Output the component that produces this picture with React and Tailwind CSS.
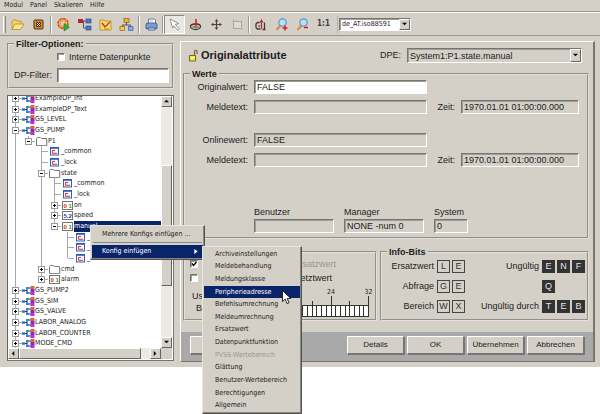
import React from "react";

const UI = "font-['DejaVu_Sans_Condensed','DejaVu_Sans',sans-serif] text-[7px]";
const SUNKEN =
  "border border-t-[#77756f] border-l-[#77756f] border-r-white border-b-white shadow-[inset_1px_1px_0_#a09d96]";
const RAISED =
  "border border-t-white border-l-white border-r-[#66645f] border-b-[#66645f] bg-[#d4d0c8]";
const GROUP = "min-w-0 border-2 border-[#e4e1da] [border-style:groove]";
const LEGEND = "ml-[5px] h-[10px] px-[2px] text-[9px] leading-[10px] font-bold";

function ToolIcon({ name }) {
  const p = { width: 15, height: 15, viewBox: "0 0 15 15", fill: "none", "aria-hidden": true };
  switch (name) {
    case "open":
      return (
        <svg {...p}>
          <path d="M2 12V4l1-1h3l1 1h4v3" fill="#f3d36a" stroke="#b98a25" strokeWidth=".8" />
          <path d="M2 12.5 5 7h9l-3.500 5.500z" fill="#fbe58c" stroke="#b98a25" strokeWidth=".8" />
        </svg>
      );
    case "close":
      return (
        <svg {...p}>
          <rect x="3" y="3" width="9" height="9" rx="1" fill="#e08a22" stroke="#4a3210" />
          <path d="m5.500 5.500 4 4m0-4-4 4" stroke="#2a1a08" strokeWidth="2.200" />
          <path d="m6 6 3 3m0-3-3 3" stroke="#fff0cc" strokeWidth="1" />
        </svg>
      );
    case "gear":
      return (
        <svg {...p}>
          <circle cx="7" cy="6.500" r="4" stroke="#d9702a" strokeWidth="3" />
          <circle cx="7" cy="6.500" r="5" stroke="#d9502a" strokeWidth="1.500" strokeDasharray="2 1.900" />
          <circle cx="7" cy="6.500" r="3.500" stroke="#f4bd45" strokeWidth="1.200" />
          <path d="M8 6.500v7.500l5.500-3.700z" fill="#3fa83c" stroke="#23751f" strokeWidth=".6" />
        </svg>
      );
    case "tree":
      return (
        <svg {...p}>
          <path d="M4 4h5M6.500 4v7h3" stroke="#555" />
          <rect x="1" y="2" width="5" height="4" fill="#b3262a" />
          <rect x="9" y="2" width="5" height="4" fill="#4a78c8" stroke="#223f7d" strokeWidth=".6" />
          <rect x="9" y="9" width="5" height="4" fill="#4a78c8" stroke="#223f7d" strokeWidth=".6" />
        </svg>
      );
    case "chart":
      return (
        <svg {...p}>
          <path d="M2 3h4l1 1h6v9H2z" fill="#f6dc6d" stroke="#b58a22" strokeWidth=".8" />
          <path d="m4 6 3 4 5-5" stroke="#c4392b" strokeWidth="1.400" />
          <path d="M6 12h5" stroke="#b58a22" />
        </svg>
      );
    case "org":
      return (
        <svg {...p}>
          <path d="M7.500 5v3M3.500 10V8h8v2" stroke="#555" />
          <rect x="5" y="1.500" width="5" height="4" fill="#efad3f" stroke="#996415" strokeWidth=".7" />
          <rect x="1" y="9.500" width="4.500" height="4" fill="#f3c558" stroke="#996415" strokeWidth=".7" />
          <rect x="9.500" y="9.500" width="4.500" height="4" fill="#89a8dd" stroke="#3c5f9f" strokeWidth=".7" />
        </svg>
      );
    case "print":
      return (
        <svg {...p}>
          <path d="M4.500 7V2h6l1 1v4" fill="#fff" stroke="#4a5f85" strokeWidth=".8" />
          <path d="m2 7 1-1h9l1 1v4.500H2z" fill="#7b9cd3" stroke="#32507f" strokeWidth=".8" />
          <path d="M4 11h7v2H4z" fill="#dce7f7" stroke="#32507f" strokeWidth=".8" />
          <path d="M6 4h3" stroke="#8a98b5" strokeWidth=".7" />
        </svg>
      );
    case "pointer":
      return (
        <svg {...p}>
          <path d="m3 2 8.500 4.500-3.200 1 4 4.200-1.500 1.500-4-4.300L5.500 11z" fill="#fff" stroke="#777" strokeWidth=".8" />
        </svg>
      );
    case "stamp":
      return (
        <svg {...p}>
          <path d="M2.500 9.500c0-1.500 2-2.500 5-2.500s5 1 5 2.500-2 3-5 3-5-1.500-5-3z" stroke="#3c3a38" strokeWidth="1.300" />
          <path d="M4.500 10h6" stroke="#3c3a38" />
          <path d="M8 2v5" stroke="#c22b25" strokeWidth="1.600" />
          <path d="M5.500 6h5L8 9.500z" fill="#c22b25" />
        </svg>
      );
    case "move":
      return (
        <svg {...p}>
          <path d="M7.500 4v7M4 7.500h7" stroke="#444" strokeWidth="1.200" />
          <path d="M7.500 2 9.300 4.400H5.700zM7.500 13l1.800-2.400H5.700zM2 7.500l2.400-1.800v3.600zM13 7.500l-2.400-1.800v3.600z" fill="#444" />
        </svg>
      );
    case "shape":
      return (
        <svg {...p}>
          <rect x="3.500" y="4.500" width="8" height="7" fill="#dedbd4" stroke="#aaa7a0" />
          <path d="M2 4h3M3.500 2.500v3M10 11.500h3M11.500 10v3" stroke="#b6b3ac" />
        </svg>
      );
    case "rotate":
      return (
        <svg {...p}>
          <path d="M6.500 5.500H4.500L3 7v3.500L4.500 12h3M7 9H5.500M11.500 5.500v7M9.500 12.500h3" stroke="#3c3a38" strokeWidth="1.300" />
          <path d="M8.500 4v8" stroke="#c22b25" strokeWidth="1.300" />
          <path d="M6.300 5.500 8.500 2l2.200 3.500z" fill="#c22b25" />
        </svg>
      );
    case "zoomin":
    case "zoomout":
      return (
        <svg {...p}>
          <path d="m6.500 8.500-4 4.500" stroke="#d58b45" strokeWidth="2" />
          <circle cx="8.500" cy="5.500" r="3.700" fill="#b9e0f8" stroke="#5a94c4" strokeWidth="1.200" />
          <path d={name === "zoomin" ? "M8.500 11h5M11 8.500v5" : "M9 10.500h4"} stroke="#cf2027" strokeWidth="1.500" />
        </svg>
      );
    default:
      return null;
  }
}

function Tool({ name, label, active }) {
  return (
    <button
      type="button"
      aria-label={label}
      className={
        "flex h-[19px] w-[21px] shrink-0 items-center justify-center " +
        (active ? "border border-t-[#8a8780] border-l-[#8a8780] border-r-white border-b-white bg-[#e9e7e2]" : "")
      }
    >
      <ToolIcon name={name} />
    </button>
  );
}

function Separator({ tight }) {
  return (
    <span
      className={
        "h-[17px] w-[2px] shrink-0 border-r border-l border-r-white border-l-[#9a978f] " + (tight ? "" : "mx-px")
      }
    />
  );
}

function Toolbar() {
  return (
    <div className="flex h-[24px] items-center border-t border-b border-t-white border-b-[#9a978f]">
      <span className="mr-px ml-[3px] h-[17px] w-[3px] shrink-0 border-x border-l-white border-r-[#8a8780]" />
      <Tool name="open" label="Öffnen" />
      <Tool name="close" label="Schließen" />
      <Separator />
      <Tool name="gear" label="Starten" />
      <Tool name="tree" label="Baum" />
      <Tool name="chart" label="Trend" />
      <Tool name="org" label="Struktur" />
      <Separator />
      <Tool name="print" label="Drucken" />
      <Separator tight />
      <Tool name="pointer" label="Auswahl" active />
      <Tool name="stamp" label="Stempel" />
      <Tool name="move" label="Verschieben" />
      <Tool name="shape" label="Rahmen" />
      <Separator tight />
      <Tool name="rotate" label="Drehen" />
      <Tool name="zoomin" label="Vergrößern" />
      <Tool name="zoomout" label="Verkleinern" />
      <button
        type="button"
        className="flex h-[19px] w-[21px] shrink-0 items-center justify-center font-['DejaVu_Sans_Condensed','DejaVu_Sans',sans-serif] text-[8px] font-bold text-[#444]"
      >
        1:1
      </button>
      <span className="ml-[3px] h-[17px] w-px bg-[#b5b2aa]" />
      <div className={"ml-px flex h-[13px] w-[72px] bg-white " + SUNKEN}>
        <select
          aria-label="Sprache"
          className={"min-w-0 flex-1 appearance-none bg-transparent pl-[2px] leading-[10px] outline-none " + UI}
        >
          <option>de_AT.iso88591</option>
        </select>
        <Arrow dir="down" className="w-[11px]" />
      </div>
    </div>
  );
}

const ARROWS = {
  up: "M0 4h6L3 1z",
  down: "M0 1h6L3 4z",
  left: "M4 0v6L1 3z",
  right: "M1 0v6l3-3z",
};

function Arrow({ dir, className }) {
  return (
    <span className={"pointer-events-none flex shrink-0 items-center justify-center " + RAISED + " " + className}>
      <svg width={5} height={5} viewBox="0 0 6 6" aria-hidden="true">
        <path d={ARROWS[dir]} fill="#000" />
      </svg>
    </span>
  );
}

/* depth, icon, expander, label, depths whose guide continues, last child, selected */
const TREE = [
  [0, "type", "+", "ExampleDP_Int", []],
  [0, "type", "+", "ExampleDP_Text", []],
  [0, "type", "+", "GS_LEVEL", []],
  [0, "type", "-", "GS_PUMP", []],
  [1, "folder", "-", "P1", [0], true],
  [2, "config", "", "_common", [0]],
  [2, "config", "", "_lock", [0]],
  [2, "folder", "-", "state", [0]],
  [3, "config", "", "_common", [0, 2]],
  [3, "config", "", "_lock", [0, 2]],
  [3, "bit", "+", "on", [0, 2]],
  [3, "float", "+", "speed", [0, 2]],
  [3, "bit", "-", "manual", [0, 2], true, true],
  [4, "config", "", "_common", [0, 2]],
  [4, "config", "", "_lock", [0, 2]],
  [4, "config", "", "_online", [0, 2], true],
  [2, "folder", "+", "cmd", [0]],
  [2, "bit", "+", "alarm", [0], true],
  [0, "type", "+", "GS_PUMP2", []],
  [0, "type", "+", "GS_SIM", []],
  [0, "type", "+", "GS_VALVE", []],
  [0, "type", "+", "LABOR_ANALOG", []],
  [0, "type", "+", "LABOR_COUNTER", []],
  [0, "type", "+", "MODE_CMD", []],
];

function NodeIcon({ kind }) {
  if (kind === "type")
    return (
      <svg width="13" height="9" viewBox="0 0 13 9" className="shrink-0" aria-hidden="true">
        <path d="M0 4.500h5M5 2v5M4 2h5M4 7h5" stroke="#26348f" strokeWidth="1.200" />
        <rect x="0" y="3.300" width="3" height="2.500" fill="#2b7ac4" />
        <path d="M4 1h3v2H4zM4 6h3v2H4z" fill="#3a86cf" />
        <rect x="8.500" y="0" width="4" height="3" fill="#e9622f" />
        <rect x="8.500" y="3" width="4" height="3" fill="#7b2fd0" />
        <rect x="8.500" y="6" width="4" height="3" fill="#b935c9" />
      </svg>
    );
  if (kind === "folder")
    return (
      <svg width="13" height="9" viewBox="0 0 13 9" className="shrink-0" aria-hidden="true">
        <path d="M1.500 8.500v-7l1-1h3l1 1h5v7z" fill="#fff" stroke="#777" />
        <path d="M12 3v6H3" stroke="#aaa" fill="none" strokeWidth=".8" />
      </svg>
    );
  if (kind === "config")
    return (
      <svg width="13" height="9" viewBox="0 0 13 9" className="shrink-0" aria-hidden="true">
        <rect x="2.500" y=".5" width="8" height="7.500" fill="#f4f6fd" stroke="#3560b4" />
        <path d="M2 1h9" stroke="#2b55b0" strokeWidth="1.500" />
        <path d="M7 3.500H4.500v2.800H9" stroke="#d23a2a" fill="none" />
      </svg>
    );
  const bit = kind === "bit";
  return (
    <svg width="13" height="9" viewBox="0 0 13 9" className="shrink-0" aria-hidden="true">
      <rect x="1.500" y=".5" width="10" height="8" fill="#fffdf8" stroke="#77756f" />
      <text x="2.500" y="6.800" fontSize="6" fontWeight="bold" fontFamily="Liberation Sans" fill={bit ? "#d0302a" : "#2340c0"}>
        {bit ? "0" : "5."}
      </text>
      <text x="7.500" y="6.800" fontSize="6" fontWeight="bold" fontFamily="Liberation Sans" fill={bit ? "#2b9a35" : "#2340c0"}>
        {bit ? "1" : "2"}
      </text>
    </svg>
  );
}

function TreeRow({ row }) {
  const [depth, kind, expander, label, guides, last, selected] = row;
  return (
    <li className="flex min-h-0 flex-1 items-stretch pl-px whitespace-nowrap">
      {Array.from({ length: depth }, (_, i) => (
        <span key={i} className="w-[13px] shrink-0">
          {guides.includes(i) && <span className="ml-[6px] block h-full w-px bg-[#a8a8a8]" />}
        </span>
      ))}
      <svg width="13" height="100%" className="shrink-0" aria-hidden="true">
        <path d="M6.500 0V5" stroke="#a8a8a8" />
        {!last && <path d="M6.500 5V12" stroke="#a8a8a8" />}
        <path d="M7 5.500H13" stroke="#a8a8a8" />
        {expander && <rect x="3.500" y="2.500" width="6" height="6" fill="#fff" stroke="#9a9a9a" />}
        {expander && <path d="M5 5.500h3" stroke="#000" />}
        {expander === "+" && <path d="M6.500 4v3" stroke="#000" />}
      </svg>
      <span className="flex items-center">
        <NodeIcon kind={kind} />
      </span>
      <span className={"flex items-center leading-none " + (selected ? "flex-1 bg-[#0a246a] text-white" : "")}>
        {label}
      </span>
    </li>
  );
}

const TRACK = "bg-[#eceae5]";

function TreeView() {
  return (
    <div
      className={
        "mt-[6px] border border-t-[#66645f] border-l-[#66645f] border-r-[#77756f] border-b-[#77756f] bg-white pr-px pb-px " +
        UI
      }
    >
      <div className="flex">
        <div className="h-[252px] min-w-0 flex-1 overflow-hidden">
          <ul className="-mt-[3px] flex h-[256px] flex-col">
            {TREE.map((row, i) => (
              <TreeRow key={i} row={row} />
            ))}
          </ul>
        </div>
        <div className={"flex w-[11px] flex-col " + TRACK}>
          <Arrow dir="up" className="h-[11px]" />
          <span className="h-[58px]" />
          <span className={"h-[121px] " + RAISED} />
          <span className="flex-1" />
          <Arrow dir="down" className="h-[11px]" />
        </div>
      </div>
      <div className={"flex h-[11px] " + TRACK}>
        <Arrow dir="left" className="w-[11px]" />
        <span className={"flex-1 " + RAISED} />
        <span className="w-[9px]" />
        <Arrow dir="right" className="w-[11px]" />
        <span className="w-[11px] bg-[#d4d0c8]" />
      </div>
    </div>
  );
}

function CheckBox({ id, defaultChecked }) {
  return (
    <span className="relative flex size-[8px] shrink-0">
      <input
        id={id}
        type="checkbox"
        defaultChecked={defaultChecked}
        className={"peer size-[8px] appearance-none bg-white " + SUNKEN}
      />
      <svg
        viewBox="0 0 8 8"
        className="pointer-events-none absolute inset-0 hidden size-[8px] peer-checked:block"
        aria-hidden="true"
      >
        <path d="m2 3.500 1.500 2L6.500 2" stroke="#000" strokeWidth="1.300" fill="none" />
      </svg>
    </span>
  );
}

function FilterOptions() {
  return (
    <fieldset className={GROUP + " pb-1"}>
      <legend className={LEGEND}>Filter-Optionen:</legend>
      <div className="grid grid-cols-[43px_1fr] gap-y-[7px] pt-1 pr-[3px] pl-[5px]">
        <div className="col-start-2 flex h-2 items-center gap-1">
          <CheckBox id="intern" />
          <label htmlFor="intern" className="leading-none whitespace-nowrap">
            Interne Datenpunkte
          </label>
        </div>
        <label htmlFor="dpfilter" className="col-start-1 self-center leading-none">
          DP-Filter:
        </label>
        <input id="dpfilter" className={"h-[15px] w-full min-w-0 bg-white px-[2px] outline-none " + SUNKEN} />
      </div>
    </fieldset>
  );
}

function Field({ id, value, white }) {
  return (
    <input
      id={id}
      defaultValue={value}
      readOnly={!white}
      className={
        "h-[14px] w-full min-w-0 px-[2px] leading-none outline-none " + (white ? "bg-white " : "bg-transparent ") + SUNKEN
      }
    />
  );
}

function ValueRow({ id, label, value, white, time, className = "" }) {
  return (
    <div className={"grid grid-cols-[63px_minmax(0,1fr)_22px_118px] items-center gap-x-[6px] pr-2 " + className}>
      <label htmlFor={id} className="text-right leading-none">
        {label}
      </label>
      <Field id={id} value={value} white={white} />
      {time && (
        <label htmlFor={id + "-zeit"} className="text-right leading-none">
          Zeit:
        </label>
      )}
      {time && <Field id={id + "-zeit"} value={time} />}
    </div>
  );
}

function Origin({ id, label, value, className }) {
  return (
    <div className={"flex flex-col gap-[3px] " + className}>
      <label htmlFor={id} className="h-2 leading-[8px]">
        {label}
      </label>
      <Field id={id} value={value} />
    </div>
  );
}

function Values() {
  return (
    <fieldset className={GROUP + " mt-[6px] mr-1 ml-[2px] pb-1"}>
      <legend className={LEGEND}>Werte</legend>
      <ValueRow id="original" label="Originalwert:" value="FALSE" white className="pt-px" />
      <ValueRow id="original-text" label="Meldetext:" time="1970.01.01 01:00:00.000" className="pt-[6px]" />
      <ValueRow id="online" label="Onlinewert:" value="FALSE" className="pt-[19px]" />
      <ValueRow id="online-text" label="Meldetext:" time="1970.01.01 01:00:00.000" className="pt-[6px]" />
      <div className="flex gap-[10px] pt-[41px] pl-[69px]">
        <Origin id="benutzer" label="Benutzer" className="w-20" />
        <Origin id="manager" label="Manager" value="NONE -num 0" className="w-20" />
        <Origin id="system" label="System" value="0" className="w-[34px]" />
      </div>
    </fieldset>
  );
}

function BitScale() {
  return (
    <svg width="158" height="32" viewBox="0 0 158 32" className="shrink-0" aria-hidden="true">
      <rect x="1.500" y="18.500" width="150" height="11" fill="#fff" stroke="#333" />
      {Array.from({ length: 33 }, (_, i) => {
        const x = Math.round((i * 150) / 32) + 1.5;
        const top = i % 8 === 0 ? 9 : i % 4 === 0 ? 14 : 18;
        return <path key={i} d={`M${x} ${top}V30`} stroke="#333" />;
      })}
      {[24, 32].map((n) => (
        <text
          key={n}
          x={(n * 150) / 32 + 1.5}
          y="7"
          fontSize="7"
          fontFamily="DejaVu Sans Condensed"
          textAnchor="middle"
          fill="#222"
        >
          {n}
        </text>
      ))}
    </svg>
  );
}

function StatusBits() {
  return (
    <fieldset className={GROUP + " flex-1"}>
      <legend className={LEGEND}>Bits</legend>
      <div className="flex flex-col gap-[6px] pt-[3px] pl-[5px]">
        <div className="flex h-2 items-center">
          <CheckBox id="ersatz" defaultChecked />
          <label htmlFor="ersatz" className="w-[138px] text-right leading-none text-[#9a978f]">
            Ersatzwert
          </label>
        </div>
        <div className="flex h-2 items-center">
          <CheckBox id="gesetzt" />
          <label htmlFor="gesetzt" className="w-[138px] pr-1 text-right leading-none">
            Gesetztwert
          </label>
        </div>
      </div>
      <div className="flex overflow-hidden pt-[5px] pl-[5px]">
        <div className="w-[27px] shrink-0 pt-[3px] pr-[6px] text-right leading-[12px]">
          User
          <br />
          Bits
        </div>
        <BitScale />
      </div>
    </fieldset>
  );
}

function Bits({ text, dark }) {
  return (
    <span className="flex gap-[2px]">
      {text.split("").map((c) => (
        <span
          key={c}
          className={
            "flex size-[13px] items-center justify-center border leading-none " +
            (dark ? "border-[#333] bg-[#333] text-[#e6e6e6]" : "border-[#444] text-[#333]")
          }
        >
          {c}
        </span>
      ))}
    </span>
  );
}

function InfoBits() {
  const rows = [
    ["Ersatzwert", "LE", "Ungültig", "ENF"],
    ["Abfrage", "GE", "", "Q"],
    ["Bereich", "WX", "Ungültig durch", "TEB"],
  ];
  return (
    <fieldset className={GROUP + " w-[209px] shrink-0"}>
      <legend className={LEGEND}>Info-Bits</legend>
      <div className="flex flex-col gap-[7px] pt-[3px] pr-[2px] pb-[6px]">
        {rows.map(([a, bits, b, dark]) => (
          <div key={a} className="grid grid-cols-[52px_28px_1fr_43px] items-center gap-x-[3px] leading-none">
            <span className="text-right">{a}</span>
            <Bits text={bits} />
            <span className="text-right whitespace-nowrap">{b}</span>
            <Bits text={dark} dark />
          </div>
        ))}
      </div>
    </fieldset>
  );
}

function PushButton({ children }) {
  return (
    <button
      type="button"
      className="h-[18px] w-[57px] shrink-0 border border-t-white border-r-[#77756f] border-b-[#77756f] border-l-white bg-[#d4d0c8] text-[8px] leading-none shadow-[1px_1px_0_#77756f]"
    >
      {children}
    </button>
  );
}

function AttributePanel() {
  return (
    <section className="mt-[5px] flex min-w-0 flex-1 flex-col border-t border-r-2 border-b border-l border-t-white border-r-[#77756f] border-b-[#77756f] border-l-white">
      <header className="flex h-[21px] items-center pt-[6px] pr-[11px] pl-2">
        <svg width="9" height="13" viewBox="0 0 9 13" aria-hidden="true">
          <path d="M5.500 7V2.500a1.200 1.200 0 0 1 2.500 0V5" stroke="#6d6a3a" strokeWidth="1.200" fill="none" />
          <path d="M.5 6.500h6v5.500h-6z" fill="#f2ea4a" stroke="#6d6a1c" />
          <path d="M2 8.500h3" stroke="#fffcc0" />
        </svg>
        <h1 className="ml-[3px] text-[11px] leading-none font-bold">Originalattribute</h1>
        <label htmlFor="dpe" className="mr-[6px] ml-auto leading-none">
          DPE:
        </label>
        <div className={"flex h-[15px] w-[175px] " + SUNKEN}>
          <select id="dpe" className="min-w-0 flex-1 appearance-none bg-transparent pl-[2px] leading-[12px] outline-none">
            <option>System1:P1.state.manual</option>
          </select>
          <Arrow dir="down" className="w-[11px]" />
        </div>
      </header>
      <Values />
      <div className="mt-2 mr-1 ml-[2px] flex gap-[3px]">
        <StatusBits />
        <InfoBits />
      </div>
      <footer className="mt-[11px] flex flex-1 gap-[3px] bg-[#a9a9a9] px-[9px] pt-1 pb-[7px]">
        <PushButton>Hilfe</PushButton>
        <span className="flex-1" />
        <PushButton>Details</PushButton>
        <PushButton>OK</PushButton>
        <PushButton>Übernehmen</PushButton>
        <PushButton>Abbrechen</PushButton>
      </footer>
    </section>
  );
}

const CONFIGS = [
  "Archiveinstellungen",
  "Meldebehandlung",
  "Meldungsklasse",
  "Peripherieadresse",
  "Befehlsumrechnung",
  "Meldeumrechnung",
  "Ersatzwert",
  "Datenpunktfunktion",
  "PVSS-Wertebereich",
  "Glättung",
  "Benutzer-Wertebereich",
  "Berechtigungen",
  "Allgemein",
];

const POPUP =
  "absolute border border-t-[#e8e6e0] border-l-[#e8e6e0] border-r-[#55534f] border-b-[#55534f] bg-[#d4d0c8] p-px shadow-[inset_-1px_-1px_0_#8a8780] " +
  UI;

function ContextMenu() {
  return (
    <>
      <div role="menu" className={POPUP + " top-[225px] left-[90px] w-[115px]"}>
        <button type="button" role="menuitem" className="block h-[15px] w-full pl-[10px] text-left leading-none whitespace-nowrap">
          Mehrere Konfigs einfügen ...
        </button>
        <hr className="mx-px mb-[2px] border-t border-[#8a8780]" />
        <button
          type="button"
          role="menuitem"
          className="flex h-[13px] w-full items-center bg-[#0a246a] pr-[5px] pl-[10px] leading-none text-white"
        >
          <span className="flex-1 text-left">Konfig einfügen</span>
          <svg width="4" height="5" viewBox="0 0 4 6" aria-hidden="true">
            <path d="M0 0v6l4-3z" fill="#fff" />
          </svg>
        </button>
      </div>
      <div role="menu" className={POPUP + " top-[246px] left-[202px] flex h-[168px] w-[100px] flex-col"}>
        {CONFIGS.map((c) => (
          <button
            key={c}
            type="button"
            role="menuitem"
            disabled={c === "PVSS-Wertebereich"}
            className={
              "flex min-h-0 w-full flex-1 items-center pl-[11px] leading-none whitespace-nowrap disabled:text-[#9a978f] " +
              (c === "Peripherieadresse" ? "bg-[#0a246a] text-white" : "")
            }
          >
            {c}
          </button>
        ))}
      </div>
      <svg className="absolute top-[290px] left-[282px]" width="10" height="15" viewBox="0 0 10 15" aria-hidden="true">
        <path d="M.5.5v11l2.700-2.400L5 13.500l2-.8-1.800-4.200h3.600z" fill="#fff" stroke="#000" strokeWidth=".8" />
      </svg>
    </>
  );
}

export default function App() {
  return (
    <div className="relative min-h-screen bg-white font-['Liberation_Sans',Arial,sans-serif] text-[9px] text-[#1c1c1c]">
      <div className="bg-[#d4d0c8]">
        <nav className={"flex h-3 items-center gap-[7px] border-b border-[#9a978f] pl-1 " + UI}>
          <button type="button" className="leading-none">Modul</button>
          <button type="button" className="leading-none">Panel</button>
          <button type="button" className="leading-none">Skalieren</button>
          <button type="button" className="leading-none">Hilfe</button>
        </nav>
        <Toolbar />
        <main className="flex gap-[6px] pr-[5px] pb-[5px] pl-[7px]">
          <aside className="w-[167px] shrink-0 pt-[3px]">
            <FilterOptions />
            <TreeView />
          </aside>
          <AttributePanel />
        </main>
      </div>
      <ContextMenu />
    </div>
  );
}
